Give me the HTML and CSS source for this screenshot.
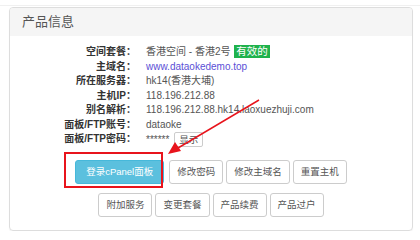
FILE: index.html
```html
<!DOCTYPE html>
<html lang="zh-CN">
<head>
    <meta charset="UTF-8">
    <meta name="viewport" content="width=device-width, initial-scale=1.0">
    <title>产品信息</title>
    <link rel="stylesheet" href="styles.css">
</head>
<body>
    <div class="topline"></div>
    <div class="panel">
        <div class="panel-heading">产品信息</div>
        <div class="panel-body">
            <div class="info">
                <div class="label">空间套餐：</div>
                <div class="value">香港空间 - 香港2号 <span class="badge">有效的</span></div>

                <div class="label">主域名：</div>
                <div class="value"><a href="#" class="link">www.dataokedemo.top</a></div>

                <div class="label">所在服务器：</div>
                <div class="value">hk14(香港大埔)</div>

                <div class="label">主机IP：</div>
                <div class="value">118.196.212.88</div>

                <div class="label">别名解析：</div>
                <div class="value">118.196.212.88.hk14.laoxuezhuji.com</div>

                <div class="label">面板/FTP账号：</div>
                <div class="value">dataoke</div>

                <div class="label">面板/FTP密码：</div>
                <div class="value">****** <button type="button" class="btn-xs">显示</button></div>
            </div>

            <div class="actions">
                <div class="btn-row">
                    <button type="button" class="btn btn-info">登录cPanel面板</button>
                    <button type="button" class="btn">修改密码</button>
                    <button type="button" class="btn">修改主域名</button>
                    <button type="button" class="btn">重置主机</button>
                </div>
                <div class="btn-row">
                    <button type="button" class="btn">附加服务</button>
                    <button type="button" class="btn">变更套餐</button>
                    <button type="button" class="btn">产品续费</button>
                    <button type="button" class="btn">产品过户</button>
                </div>
            </div>
        </div>
    </div>

    <!-- annotation: red box + arrow -->
    <div class="mark-box"></div>
    <svg class="mark-arrow" width="420" height="240" viewBox="0 0 420 240">
        <line x1="259" y1="100" x2="178" y2="148" stroke="#e8141c" stroke-width="1.5"/>
        <polygon points="168,154 175,142 181,151" fill="#e8141c"/>
    </svg>
</body>
</html>
```

FILE: styles.css
```css
body {
    font-family: "Liberation Sans", Arial, "Noto Sans CJK SC", sans-serif;
    font-size: 10px;
    margin: 0;
    padding: 0;
    background-color: #fff;
    color: #555;
}
.topline {
    height: 5px;
    border-bottom: 1px solid #f0f0f0;
}
.panel {
    margin: 1px 7px 0 9px;
    border: 1px solid #ddd;
    border-radius: 4px;
    box-shadow: 0 1px 1px rgba(0, 0, 0, 0.05);
    height: 224px;
    box-sizing: border-box;
}
.panel-heading {
    background-color: #f5f5f5;
    color: #555;
    font-size: 13px;
    line-height: 16px;
    padding: 6px 12px 6px 12px;
    border-radius: 3px 3px 0 0;
}
.panel-body {
    padding: 9px 0 0 0;
}
.info {
    display: grid;
    grid-template-columns: 126px auto;
    column-gap: 10px;
    line-height: 14.5px;
}
.label {
    text-align: right;
    font-weight: bold;
    color: #333;
}
.value {
    color: #555;
}
.link {
    color: #5b4fd6;
    text-decoration: none;
}
.badge {
    display: inline-block;
    background-color: #1fb24c;
    color: #fff;
    font-size: 10.5px;
    line-height: 13px;
    padding: 0 2px;
    margin-left: 1px;
}
.btn-xs {
    font-family: inherit;
    font-size: 9.5px;
    line-height: 11px;
    color: #555;
    background-color: #fff;
    border: 1px solid #ccc;
    border-radius: 2px;
    padding: 1px 4px;
    margin-left: 2px;
}
.actions {
    margin-top: 12px;
    display: flex;
    flex-direction: column;
    gap: 9px;
}
.btn-row {
    display: flex;
    justify-content: center;
    gap: 3px;
}
.btn {
    font-family: inherit;
    font-size: 9.5px;
    line-height: 14px;
    color: #555;
    background-color: #fff;
    border: 1px solid #ccc;
    border-radius: 3px;
    padding: 4px 7px;
    cursor: pointer;
}
.btn-info {
    color: #fff;
    background-color: #5bc0de;
    border-color: #46b8da;
    padding: 4px 10px;
    margin-right: 2px;
}
.mark-box {
    position: absolute;
    left: 64px;
    top: 152px;
    width: 95px;
    height: 32px;
    border: 2px solid #e8141c;
}
.mark-arrow {
    position: absolute;
    left: 0;
    top: 0;
}
```
